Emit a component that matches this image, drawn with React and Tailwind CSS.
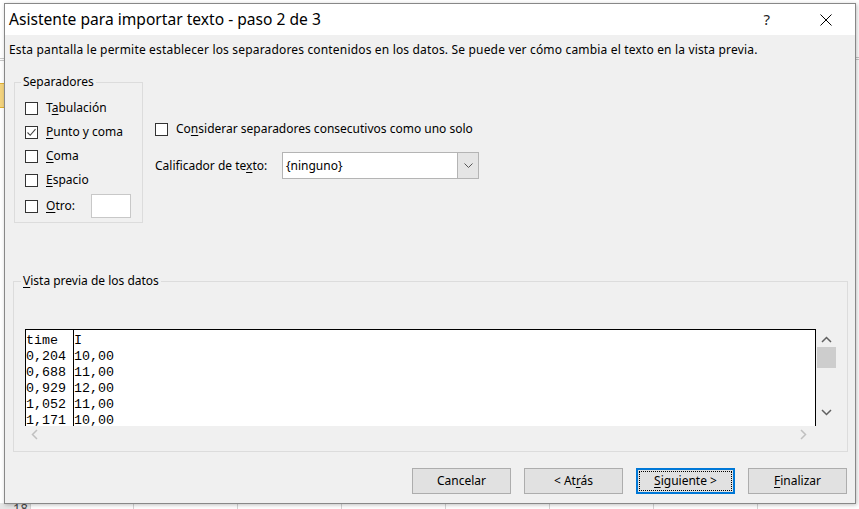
import React from 'react';

const ui = "font-['Noto_Sans',sans-serif]";

const Check = ({ checked }) => (
  <span className="flex h-[13px] w-[13px] shrink-0 items-center justify-center border border-[#333] bg-white">
    {checked && (
      <svg width="11" height="11" viewBox="0 0 11 11">
        <path d="M1.5 5.5 L4.2 8.3 L9.5 2.2" fill="none" stroke="#444" strokeWidth="1.1" />
      </svg>
    )}
  </span>
);

const Option = ({ pre, key_, post, checked, className = '' }) => (
  <div className={`flex items-center gap-[8px] ${className}`}>
    <Check checked={checked} />
    <span>
      {pre}
      <u className="underline-offset-2">{key_}</u>
      {post}
    </span>
  </div>
);

const Button = ({ children, primary }) => (
  <button
    className={`h-[26px] w-[99px] bg-[#e1e1e1] text-[12px] text-black ${
      primary ? 'border-2 border-[#0078d7] p-[1px]' : 'border border-[#adadad]'
    }`}
  >
    {primary ? (
      <span className="flex h-full w-full items-center justify-center border border-dotted border-black">{children}</span>
    ) : (
      children
    )}
  </button>
);

const rows = [
  ['time', 'I'],
  ['0,204', '10,00'],
  ['0,688', '11,00'],
  ['0,929', '12,00'],
  ['1,052', '11,00'],
  ['1,171', '10,00'],
];

const cols = [30, 133, 237, 341, 445, 549, 653, 757];

const App = () => {
  return (
    <div className={`relative h-[509px] w-[859px] overflow-hidden bg-white ${ui}`}>
      {/* spreadsheet behind */}
      <div className="absolute left-0 top-[83px] h-[25px] w-[4px] bg-[#f3d37e] border-y border-[#e0b030]" />
      <div className="absolute left-0 top-[58px] h-[3px] w-[4px] border-y border-[#c8c8c8]" />
      <div className="absolute right-0 top-[57px] h-[3px] w-[4px] border-y border-[#c8c8c8]" />
      <div className="absolute bottom-0 left-0 h-[6px] w-[30px] bg-[#e6e6e6]" />
      <span className="absolute left-[13px] top-[502px] text-[13px] leading-none text-[#444]">18</span>
      {cols.map((x) => (
        <div key={x} className="absolute bottom-0 h-[6px] w-px bg-[#d4d4d4]" style={{ left: x }} />
      ))}

      {/* dialog */}
      <div className="absolute left-[4px] top-[3px] flex h-[501px] w-[852px] flex-col border border-[#888] bg-[#f0f0f0] text-[12px] text-black shadow-[1px_1px_4px_rgba(0,0,0,0.25)]">
        <div className="flex h-[31px] shrink-0 items-center bg-white pl-[4px]">
          <span className="text-[15.6px]">Asistente para importar texto - paso 2 de 3</span>
          <span className="ml-auto mr-[50px] text-[15px] text-[#222]">?</span>
          <svg width="12" height="12" viewBox="0 0 12 12" className="mr-[23px]">
            <path d="M0.5 0.5 L11.5 11.5 M11.5 0.5 L0.5 11.5" stroke="#000" strokeWidth="1" />
          </svg>
        </div>

        <p className="ml-[4px] mt-[7px] h-[16px] leading-[16px] tracking-[0.17px]">
          Esta pantalla le permite establecer los separadores contenidos en los datos. Se puede ver cómo cambia el texto en la vista previa.
        </p>

        <div className="mt-[16px] flex">
          <fieldset className="ml-[9px] h-[149px] w-[129px] border border-[#dcdcdc] pl-[10px]">
            <legend className="ml-[-4px] px-[2px] leading-[16px]">Separadores</legend>
            <div className="mt-[6px] flex flex-col">
              <Option className="h-[24px]" pre="T" key_="a" post="bulación" />
              <Option className="h-[24px]" pre="" key_="P" post="unto y coma" checked />
              <Option className="h-[24px]" pre="" key_="C" post="oma" />
              <Option className="h-[24px]" pre="" key_="E" post="spacio" />
              <div className="flex h-[28px] items-center">
                <Option pre="" key_="O" post="tro:" />
                <span className="ml-[16px] h-[24px] w-[40px] border border-[#c8c8c8] bg-white" />
              </div>
            </div>
          </fieldset>

          <div className="ml-[12px] flex flex-col">
            <Option className="mt-[47px] h-[16px]" pre="Co" key_="n" post="siderar separadores consecutivos como uno solo" />
            <div className="mt-[15px] flex items-center">
              <span className="w-[127px]">
                Calificador de te<u className="underline-offset-2">x</u>to:
              </span>
              <div className="flex h-[27px] w-[197px] items-center border border-[#b4b4b4] bg-white">
                <span className="pl-[3px]">{'{ninguno}'}</span>
                <span className="ml-auto flex h-full w-[21px] items-center justify-center border-l border-[#b4b4b4] bg-[#e5e5e5]">
                  <svg width="9" height="6" viewBox="0 0 9 6">
                    <path d="M0.5 0.5 L4.5 4.5 L8.5 0.5" fill="none" stroke="#555" strokeWidth="1" />
                  </svg>
                </span>
              </div>
            </div>
          </div>
        </div>

        <fieldset className="ml-[8px] mt-[50px] h-[179px] w-[835px] border border-[#dcdcdc] pl-[11px]">
          <legend className="ml-[-4px] px-[2px] leading-[16px]">
            <u className="underline-offset-2">V</u>ista previa de los datos
          </legend>
          <div className="mt-[40px] flex w-[811px] flex-col">
            <div className="flex h-[97px]">
              <div className="flex w-[791px] overflow-hidden border-x border-t border-black bg-white pt-[3px] font-['Liberation_Mono',monospace] text-[13.33px] leading-[16px]">
                <div className="w-[47px] shrink-0">
                  {rows.map((r, i) => (
                    <div key={i}>{r[0]}</div>
                  ))}
                </div>
                <div className="-mt-[3px] border-l border-black pt-[3px]">
                  {rows.map((r, i) => (
                    <div key={i}>{r[1]}</div>
                  ))}
                </div>
              </div>
              <div className="flex w-[20px] flex-col items-center">
                <svg width="11" height="7" viewBox="0 0 11 7" className="mt-[7px]">
                  <path d="M1 6 L5.5 1.5 L10 6" fill="none" stroke="#606060" strokeWidth="1.5" />
                </svg>
                <div className="mt-[4px] h-[21px] w-[19px] self-end bg-[#cdcdcd]" />
                <svg width="11" height="7" viewBox="0 0 11 7" className="mt-[41px]">
                  <path d="M1 1 L5.5 5.5 L10 1" fill="none" stroke="#606060" strokeWidth="1.5" />
                </svg>
              </div>
            </div>
            <div className="flex h-[17px] items-center justify-between pl-[6px] pr-[29px]">
              <svg width="7" height="11" viewBox="0 0 7 11">
                <path d="M6 1 L1.5 5.5 L6 10" fill="none" stroke="#c0c0c0" strokeWidth="1.5" />
              </svg>
              <svg width="7" height="11" viewBox="0 0 7 11">
                <path d="M1 1 L5.5 5.5 L1 10" fill="none" stroke="#c0c0c0" strokeWidth="1.5" />
              </svg>
            </div>
          </div>
        </fieldset>

        <div className="mt-[16px] flex justify-end gap-[13px] pr-[8px]">
          <Button>Cancelar</Button>
          <Button>
            &lt; At<u className="underline-offset-2">r</u>ás
          </Button>
          <Button primary>
            <span>
              <u className="underline-offset-2">S</u>iguiente &gt;
            </span>
          </Button>
          <Button>
            <u className="underline-offset-2">F</u>inalizar
          </Button>
        </div>
      </div>
    </div>
  );
};

export default App;
